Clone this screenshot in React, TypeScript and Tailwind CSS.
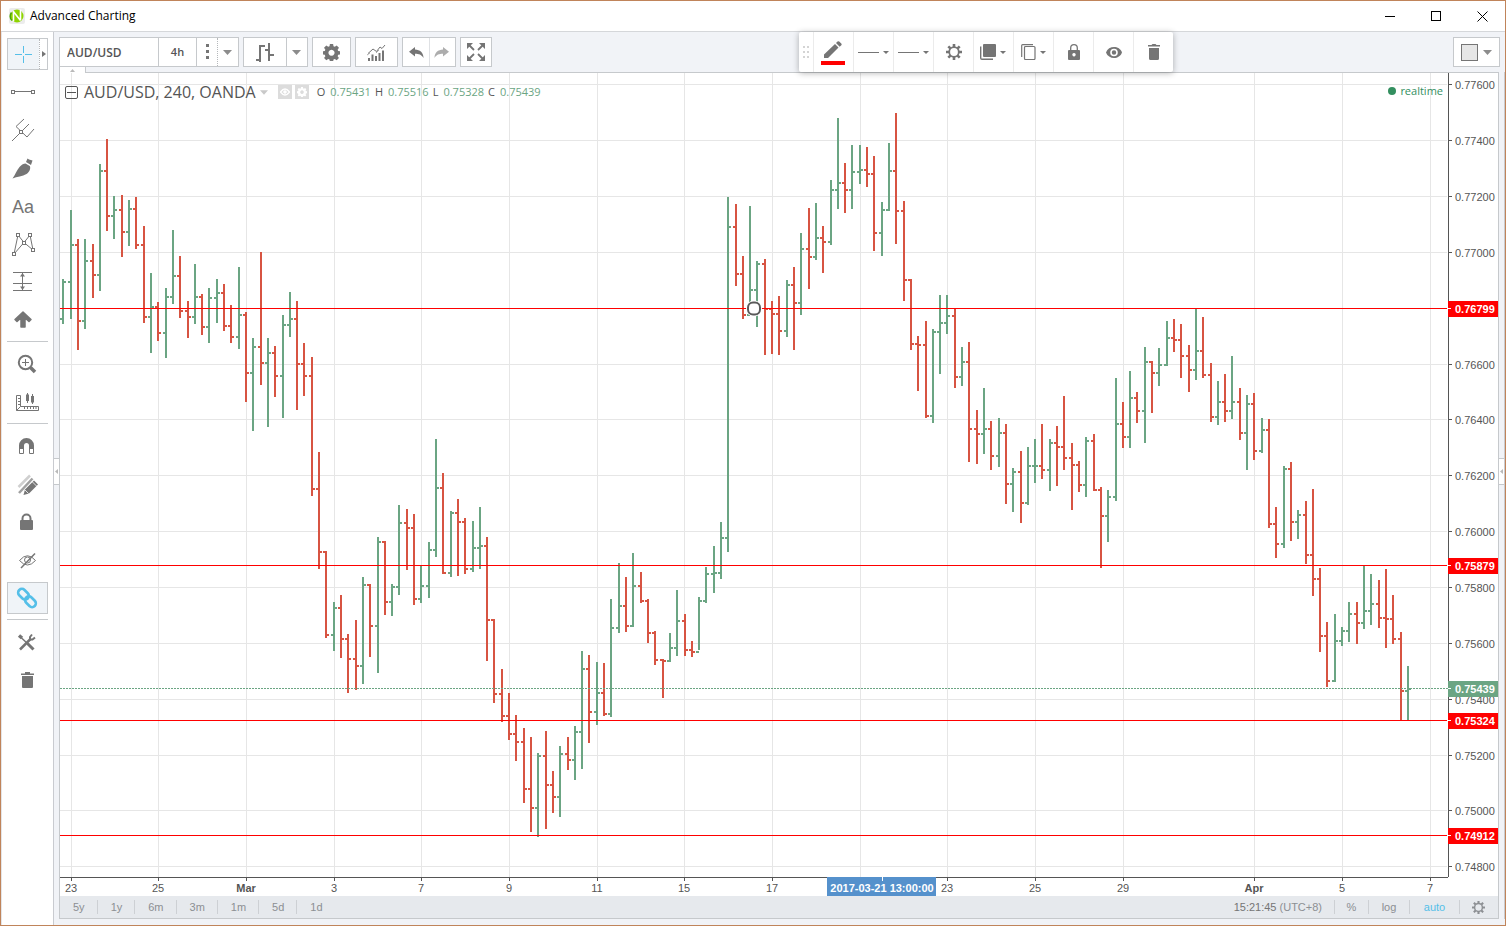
import type { ReactNode } from 'react'

// x, high, low, close in plot units (y grows downwards); a bar opens where the previous one closed
type Bar = [number, number, number, number]

const PLOT_WIDTH = 1388
const PLOT_HEIGHT = 804
const FIRST_OPEN = 246

const bars: Bar[] = [
  [3, 206, 251, 209], [11, 137, 246, 172], [18, 166, 277, 248], [25, 166, 256, 188], [33, 171, 225, 202],
  [40, 91, 218, 98], [47, 66, 158, 143], [54, 123, 166, 137], [62, 122, 184, 159], [69, 127, 173, 136],
  [76, 124, 176, 172], [84, 153, 250, 244], [91, 200, 280, 234], [98, 229, 268, 260], [106, 215, 285, 224],
  [113, 157, 231, 203], [120, 183, 245, 238], [128, 228, 265, 244], [135, 191, 251, 224], [142, 221, 262, 254],
  [149, 215, 270, 225], [157, 206, 250, 220], [164, 211, 258, 253], [171, 232, 270, 264], [179, 194, 276, 242],
  [186, 239, 329, 300], [193, 265, 358, 274], [201, 179, 312, 290], [208, 265, 354, 280], [215, 273, 324, 303],
  [223, 242, 345, 252], [230, 219, 264, 246], [237, 228, 337, 291], [244, 270, 323, 303], [252, 284, 423, 416],
  [259, 379, 496, 479], [266, 478, 565, 562], [274, 529, 578, 535], [281, 522, 585, 566], [288, 561, 620, 586],
  [296, 547, 617, 593], [303, 504, 611, 512], [310, 511, 584, 553], [318, 464, 600, 469], [325, 468, 542, 529],
  [332, 511, 543, 514], [339, 432, 522, 450], [347, 436, 497, 455], [354, 441, 532, 526], [361, 493, 530, 513],
  [369, 469, 525, 477], [376, 366, 484, 415], [383, 400, 501, 500], [391, 438, 504, 440], [398, 426, 503, 449],
  [405, 445, 501, 496], [413, 448, 499, 475], [420, 434, 496, 473], [427, 464, 588, 547], [434, 546, 630, 621],
  [442, 596, 649, 643], [449, 620, 667, 661], [456, 642, 688, 669], [464, 655, 730, 716], [471, 664, 759, 735],
  [478, 680, 764, 683], [486, 658, 756, 712], [493, 698, 740, 724], [500, 673, 744, 681], [508, 664, 697, 687],
  [515, 653, 707, 659], [522, 578, 696, 596], [529, 582, 670, 639], [537, 589, 652, 620], [544, 590, 643, 641],
  [551, 526, 644, 555], [559, 490, 560, 533], [566, 504, 559, 553], [573, 480, 554, 513], [581, 499, 530, 528],
  [588, 526, 570, 560], [595, 558, 592, 587], [603, 586, 625, 588], [610, 560, 589, 575], [617, 517, 583, 548],
  [625, 541, 583, 577], [632, 568, 584, 579], [639, 524, 577, 528], [646, 494, 530, 501], [654, 473, 520, 500],
  [661, 449, 506, 465], [668, 124, 479, 154], [676, 131, 213, 201], [683, 183, 246, 242], [690, 133, 240, 217],
  [697, 188, 254, 191], [705, 186, 282, 236], [712, 228, 281, 241], [719, 223, 282, 258], [727, 207, 264, 212],
  [734, 194, 277, 230], [741, 160, 242, 176], [749, 135, 216, 184], [756, 130, 187, 165], [763, 153, 200, 169],
  [771, 107, 172, 117], [778, 45, 136, 110], [785, 90, 140, 117], [792, 72, 136, 99], [800, 72, 111, 97],
  [807, 74, 114, 101], [814, 83, 178, 160], [822, 129, 183, 137], [829, 70, 138, 98], [836, 40, 171, 138],
  [844, 128, 228, 207], [851, 206, 277, 271], [858, 263, 318, 272], [866, 248, 345, 343], [873, 256, 350, 259],
  [880, 222, 301, 250], [887, 222, 261, 243], [895, 235, 315, 304], [902, 274, 313, 289], [909, 269, 389, 356],
  [917, 337, 391, 361], [924, 315, 381, 356], [931, 348, 397, 383], [939, 345, 394, 360], [946, 351, 431, 411],
  [953, 395, 439, 399], [961, 378, 450, 430], [968, 374, 432, 393], [975, 366, 410, 393], [982, 351, 406, 397],
  [990, 366, 418, 370], [997, 353, 413, 374], [1004, 323, 397, 385], [1012, 370, 437, 392], [1019, 388, 419, 412],
  [1026, 364, 424, 368], [1034, 361, 418, 417], [1041, 414, 495, 443], [1048, 417, 469, 424], [1056, 305, 428, 351],
  [1063, 329, 375, 364], [1070, 298, 375, 325], [1077, 319, 350, 338], [1085, 274, 370, 289], [1092, 288, 340, 300],
  [1099, 275, 313, 292], [1107, 248, 293, 265], [1114, 246, 279, 267], [1121, 251, 305, 283], [1129, 272, 319, 297],
  [1136, 236, 307, 278], [1143, 244, 305, 302], [1151, 290, 349, 344], [1158, 308, 352, 329], [1165, 301, 349, 338],
  [1172, 283, 346, 329], [1180, 315, 367, 360], [1187, 322, 397, 331], [1194, 320, 387, 378], [1202, 345, 380, 357],
  [1209, 346, 455, 451], [1216, 434, 485, 471], [1224, 393, 475, 396], [1231, 389, 468, 449], [1238, 437, 466, 442],
  [1246, 428, 491, 482], [1253, 416, 523, 506], [1260, 495, 579, 563], [1267, 549, 614, 608], [1275, 541, 609, 568],
  [1282, 554, 573, 558], [1289, 529, 569, 541], [1297, 529, 571, 550], [1304, 493, 556, 538], [1311, 501, 552, 531],
  [1319, 507, 555, 545], [1326, 496, 575, 546], [1333, 522, 571, 566], [1341, 559, 647, 618], [1348, 593, 647, 616],
]

const priceTicks = [
  { y: 11, label: '0.77600' },
  { y: 67, label: '0.77400' },
  { y: 123, label: '0.77200' },
  { y: 179, label: '0.77000' },
  { y: 291, label: '0.76600' },
  { y: 346, label: '0.76400' },
  { y: 402, label: '0.76200' },
  { y: 458, label: '0.76000' },
  { y: 514, label: '0.75800' },
  { y: 570, label: '0.75600' },
  { y: 626, label: '0.75400' },
  { y: 682, label: '0.75200' },
  { y: 737, label: '0.75000' },
  { y: 793, label: '0.74800' },
]

const levels = [
  { y: 235, label: '0.76799' },
  { y: 492, label: '0.75879' },
  { y: 647, label: '0.75324' },
  { y: 762, label: '0.74912' },
]

const lastPrice = { y: 615, label: '0.75439' }

const timeTicks = [
  { x: 11, label: '23' },
  { x: 98, label: '25' },
  { x: 186, label: 'Mar', bold: true },
  { x: 274, label: '3' },
  { x: 361, label: '7' },
  { x: 449, label: '9' },
  { x: 537, label: '11' },
  { x: 624, label: '15' },
  { x: 712, label: '17' },
  { x: 800, label: '' },
  { x: 887, label: '23' },
  { x: 975, label: '25' },
  { x: 1063, label: '29' },
  { x: 1194, label: 'Apr', bold: true },
  { x: 1282, label: '5' },
  { x: 1370, label: '7' },
]

const ohlc = [
  { key: 'O', value: '0.75431' },
  { key: 'H', value: '0.75516' },
  { key: 'L', value: '0.75328' },
  { key: 'C', value: '0.75439' },
]

const ranges = ['5y', '1y', '6m', '3m', '1m', '5d', '1d']

const pctX = (x: number) => `${(x / PLOT_WIDTH) * 100}%`
const pctY = (y: number) => `${(y / PLOT_HEIGHT) * 100}%`

function Caret({ className = 'text-[#8c8c8c]' }: { className?: string }) {
  return (
    <svg width="9" height="5" viewBox="0 0 9 5" className={className}>
      <path d="M0 0h9L4.500 5z" fill="currentColor" />
    </svg>
  )
}

function Node({ x, y }: { x: number; y: number }) {
  return <rect x={x - 1.5} y={y - 1.5} width="3" height="3" fill="#fff" />
}

const drawingTools: { name: string; icon: ReactNode }[] = [
  {
    name: 'Trend line',
    icon: (
      <>
        <path d="M6 15.500H26" />
        <Node x={6} y={16} />
        <Node x={26} y={16} />
      </>
    ),
  },
  {
    name: 'Pitchfork',
    icon: (
      <>
        <path d="M5 27L14 18M9 12.500L20 23M9 12.500L17 5M15 17L22 10M20 23L27 15" />
        <Node x={14} y={18} />
      </>
    ),
  },
  {
    name: 'Brush',
    icon: (
      <path
        d="M5.500 26.500C8.500 22.500 9.500 18.500 12.500 15C14.500 12.500 17 11.500 18.500 11.500L22.800 14C24 16.500 22.500 20 19.500 22C15.500 24.500 10 24.500 5.500 26.500ZM20.500 6.500L22 7.500L25.500 8.500L24 13L19 10Z"
        fill="#757575"
        stroke="none"
      />
    ),
  },
  { name: 'Text', icon: null },
  {
    name: 'Pattern',
    icon: (
      <>
        <path d="M7 26L11 7L17 14.500L23 7L26 22L17 14.500Z" />
        <Node x={11} y={7} />
        <Node x={23} y={7} />
        <Node x={17} y={15} />
        <Node x={7} y={26} />
        <Node x={26} y={22} />
      </>
    ),
  },
  {
    name: 'Prediction',
    icon: (
      <>
        <path d="M6 6.500H25M6 17.500H25M6 24.500H25M15.500 7V24" />
        <path d="M15.500 7L18 10.500H13ZM15.500 24L18 20.500H13Z" fill="#757575" stroke="none" />
      </>
    ),
  },
  {
    name: 'Arrow',
    icon: (
      <path
        d="M16 8L24 15.500L22 17.500L18 14V23H14V14L10 17.500L8 15.500Z"
        fill="#757575"
        strokeWidth="1.500"
        strokeLinejoin="round"
      />
    ),
  },
]

const viewTools: { name: string; icon: ReactNode }[] = [
  {
    name: 'Zoom in',
    icon: (
      <>
        <circle cx="18.500" cy="14.500" r="6.700" strokeWidth="2" />
        <path d="M15 14.500H22M18.500 11V18" />
        <path d="M23.500 19.500L28 24" strokeWidth="3.500" />
      </>
    ),
  },
  {
    name: 'Measure',
    icon: (
      <>
        <path d="M9.500 9.500H13.500V20.500H31.500V24.500H9.500ZM9.500 24.500L13.500 20.500" />
        <path d="M11 12.500H13M11 15.500H13M11 18.500H13M17.500 21V23M20.500 21V23M23.500 21V23M26.500 21V23M29 21V23" />
        <path d="M20.500 7V17M25.500 8V18" />
        <path d="M20.500 8.500V15M25.500 10V16.500" strokeWidth="3" />
      </>
    ),
  },
]

const stateTools: { name: string; icon: ReactNode }[] = [
  {
    name: 'Magnet',
    icon: (
      <>
        <path d="M12 19V15.500a7.500 7.500 0 0 1 15 0V19H22V15.500a2.500 2.500 0 0 0 -5 0V19Z" fill="#757575" stroke="none" />
        <path d="M12.500 18V23.500H16.500V18M22.500 18V23.500H26.500V18" />
      </>
    ),
  },
  {
    name: 'Stay in drawing mode',
    icon: (
      <>
        <path d="M11.500 19L23 7.500" strokeWidth="2.500" stroke="#cfcfcf" />
        <path d="M12 25L25.500 10.500" strokeWidth="2.500" stroke="#a0a0a0" />
        <path d="M16.500 27L18 21.500L27 12.500L31 16.500L22 25.500Z" fill="#757575" stroke="none" />
        <path d="M25 13.500L30 18.500M18 22L21.500 25.500" stroke="#fff" strokeWidth=".8" />
      </>
    ),
  },
  {
    name: 'Lock all drawings',
    icon: (
      <>
        <rect x="13" y="14" width="13" height="10" rx="1" fill="#757575" stroke="none" />
        <path d="M15.500 15V12.500a4 4 0 0 1 8 0V15" strokeWidth="2" />
      </>
    ),
  },
  {
    name: 'Hide all drawings',
    icon: (
      <>
        <path d="M12.500 16.500Q20.500 7 28.500 16.500Q20.500 25.500 12.500 16.500Z" />
        <circle cx="20.500" cy="16" r="3" />
        <path d="M14 24L28 9.500" strokeWidth="1.500" />
      </>
    ),
  },
]

function ToolIcon({ children }: { children: ReactNode }) {
  return (
    <svg width="41" height="32" viewBox="0 0 41 32" fill="none" stroke="#757575" className="block">
      {children}
    </svg>
  )
}

function ToolButton({ name, icon }: { name: string; icon: ReactNode }) {
  return (
    <button aria-label={name} className="mb-1.5 block h-8 w-[41px] shrink-0 text-left">
      {icon ? <ToolIcon>{icon}</ToolIcon> : <span className="block pt-px pl-[5px] text-[18px] leading-8 text-[#757575]">Aa</span>}
    </button>
  )
}

function ToolSeparator() {
  return <div className="-mt-px mb-1.5 h-px w-[41px] shrink-0 bg-[#c6c9cc]" />
}

function Sidebar() {
  return (
    <nav className="flex w-[53px] shrink-0 flex-col border-r border-l border-r-[#c9cbd0] border-l-[#e4e5e8] bg-white pt-1.5 pl-[5px]">
      <div className="mb-1.5 flex h-8 w-[41px] shrink-0 border border-[#c6c9cc]">
        <button aria-label="Crosshair" className="flex w-[31px] items-center justify-center bg-[#f0f4f8]">
          <svg width="17" height="17" viewBox="0 0 17 17" stroke="#55bfe8">
            <path d="M0 8.500H7M10 8.500H17M8.500 0V7M8.500 10V17" />
          </svg>
        </button>
        <button
          aria-label="Cursor types"
          className="flex flex-1 items-center justify-center border-l border-dotted border-[#b5b8bb]"
        >
          <svg width="4" height="6" viewBox="0 0 4 6">
            <path d="M0 0L4 3L0 6z" fill="#757575" />
          </svg>
        </button>
      </div>
      {drawingTools.map((tool) => (
        <ToolButton key={tool.name} {...tool} />
      ))}
      <ToolSeparator />
      {viewTools.map((tool) => (
        <ToolButton key={tool.name} {...tool} />
      ))}
      <ToolSeparator />
      {stateTools.map((tool) => (
        <ToolButton key={tool.name} {...tool} />
      ))}
      <button aria-label="Link" className="mb-1.5 h-8 w-[41px] shrink-0 bg-[#f0f4f8] outline -outline-offset-1 outline-[#c6c9cc]">
        <svg width="41" height="32" viewBox="0 0 41 32" fill="none" stroke="#55bfe8" strokeWidth="2.600">
          <rect x="10.500" y="8.500" width="12" height="7.500" rx="3.700" transform="rotate(45 16.500 12.250)" />
          <rect x="17.500" y="16" width="12" height="7.500" rx="3.700" transform="rotate(45 23.500 19.750)" />
        </svg>
      </button>
      <ToolSeparator />
      <ToolButton
        name="Settings"
        icon={
          <>
            <path d="M12 9.500L15 12" strokeWidth="3.500" />
            <path d="M14 11.500L21 18" strokeWidth="1.500" />
            <path d="M20.500 17.500L26.500 23.500" strokeWidth="3" />
            <path d="M13 23.500L23.500 13" strokeWidth="2.500" />
            <path d="M25 8.500L23 11V13.500H25.500L28 11.500" strokeWidth="2" />
          </>
        }
      />
      <ToolButton
        name="Remove all"
        icon={<path d="M14 11V9.500H18V8H23V9.500H27V11ZM15 12H26V23Q26 24 25 24H16Q15 24 15 23Z" fill="#757575" stroke="none" />}
      />
    </nav>
  )
}

const toolGroup = 'flex h-[30px] border border-[#c6c9cc] bg-white text-[#757575]'
const toolButton = 'flex items-center justify-center'

function GearIcon({ size }: { size: number }) {
  return (
    <svg width={size} height={size} viewBox="0 0 18 18">
      <path
        fillRule="evenodd"
        fill="currentColor"
        d="M7.300 0h3.400l.4 2.400 1.400.6 2-1.400 2.400 2.400-1.400 2 .6 1.400 2.300.3v3.400l-2.300.4-.6 1.400 1.400 2-2.400 2.400-2-1.400-1.400.6-.4 2.300H7.300l-.4-2.300-1.400-.6-2 1.400-2.400-2.400 1.400-2-.6-1.400L-.4 11.100V7.700l2.300-.3.600-1.400-1.400-2 2.400-2.400 2 1.400 1.400-.6zM9 6a3.200 3.200 0 1 0 .01 0z"
      />
    </svg>
  )
}

function ThinGearIcon({ size }: { size: number }) {
  return (
    <svg width={size} height={size} viewBox="0 0 16 16" fill="none" stroke="currentColor">
      <circle cx="8" cy="8" r="4.800" strokeWidth="1.800" />
      <path
        d="M8 0V3M8 13V16M0 8H3M13 8H16M2.300 2.300L4.400 4.400M11.600 11.600L13.700 13.700M13.700 2.300L11.600 4.400M4.400 11.600L2.300 13.700"
        strokeWidth="2.600"
      />
    </svg>
  )
}

function TopToolbar() {
  return (
    <div className="flex h-10 shrink-0 items-start gap-1 pt-[5px] pr-[5px]">
      <div className={toolGroup}>
        <input
          aria-label="Symbol"
          defaultValue="AUD/USD"
          className="w-[98px] px-[7px] pt-px font-['Open_Sans',sans-serif] text-[12px] font-semibold text-[#555] outline-none"
        />
        <button className={`${toolButton} w-[38px] border-l border-[#c6c9cc] font-['Open_Sans',sans-serif] text-[11px] font-semibold text-[#555]`}>
          4h
        </button>
        <button aria-label="Intervals" className={`${toolButton} w-[21px] border-l border-[#c6c9cc]`}>
          <svg width="3" height="16" viewBox="0 0 3 16" fill="currentColor">
            <path d="M0 0h3v3H0zM0 6h3v3H0zM0 12h3v3H0z" />
          </svg>
        </button>
        <button aria-label="More intervals" className={`${toolButton} w-[21px] border-l border-dotted border-[#b5b8bb] pr-0.5`}>
          <Caret />
        </button>
      </div>
      <div className={toolGroup}>
        <button aria-label="Bar style" className={`${toolButton} w-[42px]`}>
          <svg width="18" height="19" viewBox="0 0 18 19" fill="none" stroke="currentColor" strokeWidth="2">
            <path d="M4 2V19M0 17H4M4 3H9M13 0V18M9 7H13M13 12H18" />
          </svg>
        </button>
        <button aria-label="More bar styles" className={`${toolButton} w-[21px] border-l border-[#c6c9cc] pr-0.5`}>
          <Caret />
        </button>
      </div>
      <button aria-label="Properties" className={`${toolGroup} w-[39px] items-center justify-center`}>
        <GearIcon size={17} />
      </button>
      <button aria-label="Indicators" className={`${toolGroup} w-[43px] items-center justify-center`}>
        <svg width="19" height="17" viewBox="0 0 19 17" fill="none" stroke="currentColor">
          <path d="M2 17V14M5.500 17V10.500M9 17V12M12.500 17V9M16 17V6.500" strokeWidth="2" />
          <path d="M1 9.500L6 5L9.500 7.500L13 3L15 4.500L18 1" />
          <path d="M0 11L3 9M9 9L12 6" strokeWidth=".6" />
        </svg>
      </button>
      <div className={toolGroup}>
        <button aria-label="Undo" className={`${toolButton} w-[26px]`}>
          <svg width="15" height="11" viewBox="0 0 15 11" fill="currentColor">
            <path d="M6 0V2.500C11 2.700 14.500 5.500 14.500 11C12.500 7.500 10 6.700 6 6.700V9.500L0 4.700Z" />
          </svg>
        </button>
        <button aria-label="Redo" className={`${toolButton} w-[26px] border-l border-[#dfe1e4] pr-0.5 text-[#adadad]`}>
          <svg width="15" height="11" viewBox="0 0 15 11" fill="currentColor">
            <path d="M9 0V2.500C4 2.700 .5 5.500 .5 11C2.500 7.500 5 6.700 9 6.700V9.500L15 4.700Z" />
          </svg>
        </button>
      </div>
      <button aria-label="Full screen" className={`${toolGroup} w-8 items-center justify-center`}>
        <svg width="18" height="18" viewBox="0 0 18 18" fill="currentColor" stroke="currentColor" strokeWidth="1.800">
          <path
            stroke="none"
            d="M0 0H6L0 6ZM18 0V6L12 0ZM0 18V12L6 18ZM18 18H12L18 12Z"
          />
          <path d="M2 2L7 7M16 2L11 7M2 16L7 11M16 16L11 11" />
        </svg>
      </button>
      <button aria-label="Background" className={`${toolGroup} ml-auto w-[47px] items-center justify-center gap-[5px]`}>
        <span className="h-[17px] w-[17px] border border-[#757575] bg-[#e6e6e6]" />
        <Caret />
      </button>
    </div>
  )
}

function SmallCaret() {
  return (
    <svg width="6" height="3" viewBox="0 0 6 3">
      <path d="M0 0h6L3 3z" fill="#757575" />
    </svg>
  )
}

const floatButton = 'flex w-10 items-center justify-center border-l border-[#ebebeb]'

function DrawingToolbar() {
  return (
    <div className="absolute top-0 right-[332px] flex h-10 w-[374px] rounded-[2px] bg-white text-[#757575] shadow-[0_1px_6px_rgba(0,0,0,0.3)]">
      <div className="flex w-[14px] items-center justify-center">
        <svg width="6" height="12" viewBox="0 0 6 12" fill="#d4d4d4">
          <path d="M0 0h2v2H0zM4 0h2v2H4zM0 5h2v2H0zM4 5h2v2H4zM0 10h2v2H0zM4 10h2v2H4z" />
        </svg>
      </div>
      <button aria-label="Line colour" className={`${floatButton} flex-col gap-[3px] pt-px pr-px`}>
        <svg width="18" height="17" viewBox="0 0 18 17" fill="currentColor">
          <path d="M0 13.500L11 3L14.500 6.500L4 17H0ZM12 2L13.500 .5Q14.300 -.2 15.200 .5L17.300 2.500Q18 3.400 17.300 4.200L15.700 5.700Z" />
        </svg>
        <span className="h-1 w-6 bg-[#ff0000]" />
      </button>
      <button aria-label="Line width" className={`${floatButton} gap-1`}>
        <span className="h-px w-[21px] bg-[#757575]" />
        <SmallCaret />
      </button>
      <button aria-label="Line style" className={`${floatButton} gap-1`}>
        <span className="h-px w-[21px] bg-[#757575]" />
        <SmallCaret />
      </button>
      <button aria-label="Format" className={floatButton}>
        <ThinGearIcon size={16} />
      </button>
      <button aria-label="Visual order" className={`${floatButton} gap-1 pr-0.5`}>
        <svg width="16" height="16" viewBox="0 0 16 16">
          <rect x="3" width="13" height="13" rx="1" fill="currentColor" />
          <path d="M.7 2.500V14Q.7 15.300 2 15.300H13" fill="none" stroke="currentColor" strokeWidth="1.400" />
        </svg>
        <SmallCaret />
      </button>
      <button aria-label="Clone" className={`${floatButton} gap-1`}>
        <svg width="15" height="16" viewBox="0 0 15 16" fill="none" stroke="currentColor" strokeWidth="1.200">
          <rect x="3.500" y="2.500" width="10.500" height="13" rx="1" />
          <path d="M.7 13V1.500Q.7 .6 1.600 .6H12" />
        </svg>
        <SmallCaret />
      </button>
      <button aria-label="Lock" className={floatButton}>
        <svg width="12" height="16" viewBox="0 0 12 16">
          <path
            fillRule="evenodd"
            fill="currentColor"
            d="M1 6H11Q12 6 12 7V15Q12 16 11 16H1Q0 16 0 15V7Q0 6 1 6ZM6 9a1.700 1.700 0 1 0 .01 0z"
          />
          <path d="M2.700 6.500V4a3.300 3.300 0 0 1 6.600 0V6.500" fill="none" stroke="currentColor" strokeWidth="1.300" />
        </svg>
      </button>
      <button aria-label="Hide" className={floatButton}>
        <svg width="16" height="11" viewBox="0 0 16 11" fill="none" stroke="currentColor">
          <path d="M0 5.500C2.500 -1.800 13.500 -1.800 16 5.500C13.500 12.800 2.500 12.800 0 5.500Z" fill="currentColor" stroke="none" />
          <circle cx="8" cy="5.500" r="3" stroke="#fff" strokeWidth="1.600" />
        </svg>
      </button>
      <button aria-label="Remove" className={floatButton}>
        <svg width="12" height="16" viewBox="0 0 12 16" fill="currentColor">
          <path d="M0 2.500V1H3.500L4.500 0H7.500L8.500 1H12V2.500ZM1 4H11V14.500Q11 16 9.500 16H2.500Q1 16 1 14.500Z" />
        </svg>
      </button>
    </div>
  )
}

function Plot() {
  return (
    <svg
      className="block h-full w-full"
      viewBox={`0 0 ${PLOT_WIDTH} ${PLOT_HEIGHT}`}
      preserveAspectRatio="none"
      fill="none"
      shapeRendering="crispEdges"
    >
      <g stroke="#e6e6e6">
        {priceTicks.map(({ y }) => (
          <path key={y} d={`M0 ${y + 0.5}H${PLOT_WIDTH - 1}`} />
        ))}
        {timeTicks.map(({ x }) => (
          <path key={x} d={`M${x + 0.5} 0V${PLOT_HEIGHT}`} />
        ))}
      </g>
      {bars.map(([x, high, low, close], i) => {
        const open = i === 0 ? FIRST_OPEN : bars[i - 1][3]
        return (
          <path
            key={x}
            d={`M${x} ${high}V${low}M${x - 3} ${open}H${x}M${x} ${close}H${x + 3}`}
            stroke={close <= open ? '#6ba583' : '#d75442'}
            strokeWidth="2"
          />
        )
      })}
      <path d={`M0 ${lastPrice.y + 0.5}H${PLOT_WIDTH}`} stroke="#6ba583" strokeDasharray="2 1" />
      {levels.map(({ y }) => (
        <path key={y} d={`M0 ${y + 0.5}H${PLOT_WIDTH - 1}`} stroke="#ff0000" />
      ))}
      <g shapeRendering="auto">
        <circle cx="694" cy="235.500" r="8" fill="#fff" />
        <rect x="688" y="229.500" width="12" height="12" rx="5" stroke="#5a5a5a" strokeWidth="2" />
      </g>
    </svg>
  )
}

function Legend() {
  return (
    <div className="absolute top-2 left-[5px] flex h-[22px] items-center font-['Open_Sans',sans-serif] text-[#555]">
      <button aria-label="Collapse" className="flex h-[13px] w-[13px] items-center justify-center rounded-[2px] border border-[#555]">
        <span className="h-px w-[9px] bg-[#555]" />
      </button>
      <span className="ml-1.5 text-[16px] leading-[22px]">AUD/USD, 240, OANDA</span>
      <Caret className="ml-1 w-2 text-[#c9c9c9]" />
      <button aria-label="Hide series" className="ml-[10px] flex h-[14px] w-[14px] items-center justify-center bg-[#dcdcdc]">
        <svg width="10" height="8" viewBox="0 0 10 8" fill="none" stroke="#fff">
          <path d="M.5 4Q5 -2 9.500 4Q5 10 .5 4Z" strokeWidth="1.300" />
          <circle cx="5" cy="4" r="1.300" fill="#fff" />
        </svg>
      </button>
      <button aria-label="Format series" className="ml-[3px] flex h-[14px] w-[14px] items-center justify-center bg-[#dcdcdc] text-white">
        <GearIcon size={10} />
      </button>
      <dl className="ml-2 flex text-[11px]">
        {ohlc.map(({ key, value }) => (
          <div key={key} className="mr-1 flex gap-[5px]">
            <dt>{key}</dt>
            <dd className="text-[#6ba583]">{value}</dd>
          </div>
        ))}
      </dl>
    </div>
  )
}

function PriceAxis() {
  return (
    <svg className="block h-full w-[50px] text-[11px]" shapeRendering="crispEdges">
      <path d="M.5 0V2000" stroke="#555" />
      {priceTicks.map(({ y, label }) => (
        <g key={label}>
          <rect x="1" y={pctY(y)} width="3" height="1" fill="#555" />
          <text x="7" y={pctY(y)} dy="5" fill="#555">
            {label}
          </text>
        </g>
      ))}
      {[...levels, lastPrice].map(({ y, label }) => (
        <svg key={label} y={pctY(y - 7)} width="50" height="16" fontWeight="bold">
          <rect width="50" height="16" fill={label === lastPrice.label ? '#6ba583' : '#ff0000'} />
          <rect y="7" width="3" height="1" fill="#fff" />
          <text x="7" y="12" fill="#fff">
            {label}
          </text>
        </svg>
      ))}
    </svg>
  )
}

function TimeAxis() {
  return (
    <div className="relative h-[19px] shrink-0 pr-[50px]">
      <svg className="block h-[19px] w-full overflow-visible text-[11px]" shapeRendering="crispEdges">
        <rect width="100%" height="1" fill="#555" />
        {timeTicks.map(({ x, label, bold }) => (
          <g key={x}>
            <rect x={pctX(x)} y="1" width="1" height="3" fill="#555" />
            <text x={pctX(x)} y="15" fill="#555" textAnchor="middle" fontWeight={bold ? 'bold' : 'normal'}>
              {label}
            </text>
          </g>
        ))}
        <svg x={pctX(767)} width="109" height="19">
          <rect width="109" height="19" fill="#5591cc" />
          <rect x="55" width="1" height="4" fill="#fff" />
          <text x="55" y="15" fill="#fff" textAnchor="middle" fontWeight="bold">
            2017-03-21 13:00:00
          </text>
        </svg>
      </svg>
    </div>
  )
}

function BottomBar() {
  return (
    <div className="flex h-[22px] shrink-0 items-center bg-[#e6e9ed] text-[11px] text-[#8c8f93]">
      <div className="flex divide-x divide-[#cdd0d4]">
        {ranges.map((range) => (
          <button key={range} className="h-[14px] pr-3 pl-[13px] leading-[14px]">
            {range}
          </button>
        ))}
      </div>
      <div className="ml-auto flex divide-x divide-[#cdd0d4]">
        <button className="h-[14px] px-3 leading-[14px]">
          <span className="text-[#757575]">15:21:45</span> (UTC+8)
        </button>
        <button className="h-[14px] w-[34px] leading-[14px]">%</button>
        <button className="h-[14px] w-[41px] leading-[14px]">log</button>
        <button className="h-[14px] w-[50px] leading-[14px] text-[#55bfe8]">auto</button>
        <button aria-label="Scale properties" className="flex h-[14px] w-[38px] items-center justify-center pr-0.5">
          <ThinGearIcon size={13} />
        </button>
      </div>
    </div>
  )
}

function Chart() {
  return (
    <section className="flex min-h-0 flex-1 flex-col border border-[#c6c9cc] bg-white">
      <div className="flex min-h-0 flex-1">
        <div className="relative min-w-0 flex-1">
          <Plot />
          <Legend />
          <div className="absolute top-[11px] right-[5px] flex items-center gap-1 font-['Open_Sans',sans-serif] text-[11px] leading-[14px] text-[#338f5f]">
            <span className="h-2 w-2 rounded-full bg-[#338f5f]" />
            realtime
          </div>
        </div>
        <PriceAxis />
      </div>
      <TimeAxis />
      <BottomBar />
    </section>
  )
}

function TitleBar() {
  return (
    <header className="flex h-[31px] shrink-0 items-center border-b border-[#d5d7da] bg-white pl-2">
      <svg width="16" height="16" viewBox="0 0 16 16">
        <rect width="16" height="16" rx="2" fill="#ececec" />
        <circle cx="8" cy="8" r="6.500" fill="#8fd400" />
        <path d="M4.500 3V13.500M4 3L11.500 12.500M11.500 1.500V12.500" stroke="#fff" strokeWidth="1.600" fill="none" />
        <path d="M2.500 4.500A6.500 6.500 0 0 0 3 12.500" stroke="#4da600" strokeWidth="1.500" fill="none" />
      </svg>
      <h1 className="ml-[5px] font-['Open_Sans',sans-serif] text-[12px] text-black">Advanced Charting</h1>
      <div className="ml-auto flex">
        <button aria-label="Minimize" className="flex h-[30px] w-[46px] items-center justify-center">
          <span className="h-px w-[10px] bg-black" />
        </button>
        <button aria-label="Maximize" className="flex h-[30px] w-[46px] items-center justify-center">
          <span className="h-[10px] w-[10px] border border-black" />
        </button>
        <button aria-label="Close" className="flex h-[30px] w-[46px] items-center justify-center">
          <svg width="11" height="11" viewBox="0 0 11 11" stroke="#000">
            <path d="M.5 .5L10.500 10.500M10.500 .5L.5 10.500" />
          </svg>
        </button>
      </div>
    </header>
  )
}

export default function App() {
  return (
    <div className="flex h-screen flex-col border border-[#c0845a] bg-white font-['Liberation_Sans',Arial,sans-serif]">
      <TitleBar />
      <div className="flex min-h-0 flex-1 bg-[#f1f3f7]">
        <Sidebar />
        <div className="flex w-[5px] shrink-0 items-center">
          <button
            aria-label="Hide toolbar"
            className="-mt-[14px] flex h-[27px] w-[5px] items-center justify-center border-y border-[#c6c9cc] bg-white"
          >
            <svg width="3" height="5" viewBox="0 0 3 5">
              <path d="M3 0V5L0 2.500z" fill="#b9b9b9" />
            </svg>
          </button>
        </div>
        <main className="relative flex min-w-0 flex-1 flex-col pb-1.5">
          <TopToolbar />
          <div className="absolute top-[35px] left-0 flex h-1.5 w-[27px] items-center justify-center border-x border-[#c6c9cc] bg-white">
            <svg width="5" height="3" viewBox="0 0 5 3">
              <path d="M0 3h5L2.500 0z" fill="#b9b9b9" />
            </svg>
          </div>
          <div className="flex min-h-0 flex-1">
            <div className="flex min-w-0 flex-1 flex-col">
              <Chart />
            </div>
            <div className="flex w-1.5 shrink-0 items-center border-r border-[#c9cbd0]">
              <button
                aria-label="Show panel"
                className="-mt-12 flex h-[27px] w-[5px] items-center justify-center border-y border-[#c6c9cc] bg-white"
              >
                <svg width="3" height="5" viewBox="0 0 3 5">
                  <path d="M3 0V5L0 2.500z" fill="#b9b9b9" />
                </svg>
              </button>
            </div>
          </div>
          <DrawingToolbar />
        </main>
      </div>
    </div>
  )
}
